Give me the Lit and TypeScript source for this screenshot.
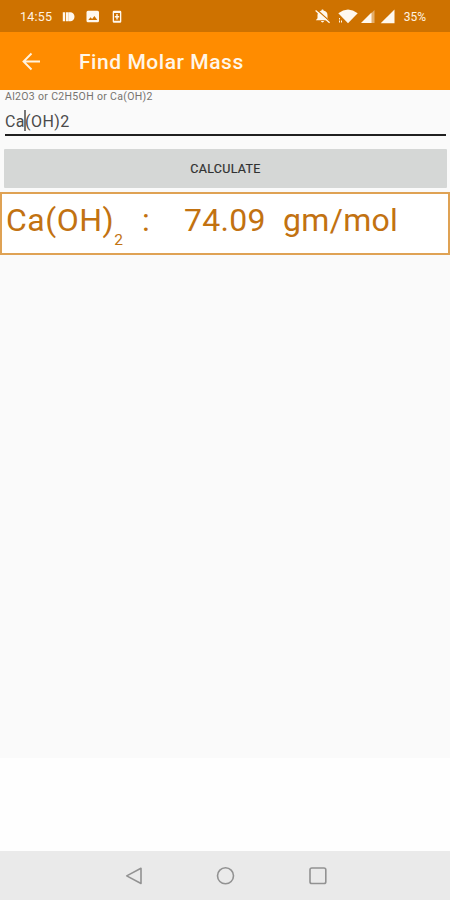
import { LitElement, html, css } from "lit";
import { customElement, state } from "lit/decorators.js";

@customElement("status-bar")
class StatusBar extends LitElement {
  static styles = css`
    :host { display: flex; align-items: center; justify-content: space-between; height: 32px; box-sizing: border-box; padding: 1px 24px 0 20px; background: #ce7200; color: #fff3e2; font-size: 12px; }
    .group { display: flex; align-items: center; }
    .clock { width: 42px; font-size: 12.5px; letter-spacing: 0.2px; }
    svg { display: block; fill: #fff8ee; }
    .battery { margin-left: 8px; font-size: 12px; letter-spacing: 0; }
  `;
  render() {
    return html`
      <div class="group">
        <span class="clock">14:55</span>
        <svg width="66" height="20" viewBox="62 6.700 66 20">
          <path d="M62.800 12h2.200v9h-2.200zM65.800 12h3v9h-3zM69 12h1.300a4.200 4.500 0 0 1 0 9h-1.300z" />
          <path fill-rule="evenodd" d="M88 10.500h9.500a1.500 1.500 0 0 1 1.500 1.500v8.500a1.500 1.500 0 0 1-1.500 1.500H88a1.500 1.500 0 0 1-1.500-1.500V12a1.500 1.500 0 0 1 1.500-1.500zM88.300 19.800h9l-2.900-4-2.300 2.900-1.500-1.800z" />
          <path fill-rule="evenodd" d="M114 10.500h6a1.300 1.300 0 0 1 1.300 1.300v9.400a1.300 1.300 0 0 1-1.300 1.300h-6a1.300 1.300 0 0 1-1.300-1.300v-9.400a1.300 1.300 0 0 1 1.300-1.300zM114 12.700v7.800h6v-7.800z" />
          <path d="M116.300 13.600h1.400v2h1.500v1.500h-1.500v2.200h-1.400v-2.200h-1.500v-1.500h1.500z" />
        </svg>
      </div>
      <div class="group">
        <svg width="82" height="20" viewBox="314 7 82 20">
          <path d="M322.500 9.500c.8 0 1 .5 1 1.100 2.900.6 4 2.500 4 4.700v3l1.700 2H315.800l1.700-2v-3c0-2.200 1.200-4.100 4-4.700 0-.6.200-1.100 1-1.100zM321 21h3c-.1 1.900-2.900 1.900-3 0z" />
          <path d="M316.600 9.500l14 12.500" fill="none" stroke="#ce7200" stroke-width="1.200" />
          <path d="M315.600 10.600l14 12.200" fill="none" stroke="#fff8ee" stroke-width="1.300" />
          <path d="M338.300 13.200q9.700-7.400 19.400 0L348 23.300z" />
          <path d="M339.500 18v1.500M339.500 20.500v2M341.500 20.500v2" stroke="#fff8ee" stroke-width="1" />
          <path d="M374.500 10v13h-13z" opacity=".45" />
          <path d="M371.500 12.500V23H361z" />
          <path d="M394.500 9.500V23.300H380.700z" />
        </svg>
        <span class="battery">35%</span>
      </div>`;
  }
}

@customElement("app-bar")
class AppBar extends LitElement {
  static styles = css`
    :host { display: flex; align-items: center; height: 58px; box-sizing: border-box; padding: 1px 0 0 20px; background: #ff8c00; color: #fff6e8; }
    svg { display: block; margin-right: 37px; }
    h1 { margin: 0; font-size: 21px; font-weight: 500; letter-spacing: 0.55px; }
  `;
  render() {
    return html`
      <svg width="22" height="22" viewBox="0 0 22 22" fill="none" stroke="#fff3df" stroke-width="1.900"><path d="M20 10.500H4M11.500 2.500l-8 8 8 8" /></svg>
      <h1>Find Molar Mass</h1>`;
  }
}

@customElement("nav-bar")
class NavBar extends LitElement {
  static styles = css`
    :host { display: flex; justify-content: center; align-items: center; gap: 72px; height: 49px; background: #eaeaea; }
    svg { display: block; fill: none; stroke: #929292; stroke-width: 1.6; stroke-linejoin: round; }
  `;
  render() {
    return html`
      <svg width="20" height="20" viewBox="0 0 20 20"><path d="M18 2.300v15.200L3.700 9.900z" /></svg>
      <svg width="20" height="20" viewBox="0 0 20 20"><circle cx="10.500" cy="9.800" r="8" /></svg>
      <svg width="20" height="20" viewBox="0 0 20 20"><rect x="3" y="2" width="15.800" height="15.500" rx="1.800" /></svg>`;
  }
}

@customElement("app-root")
class AppRoot extends LitElement {
  static styles = css`
    :host { display: flex; flex-direction: column; width: 450px; height: 900px; overflow: hidden; background: #fefefe; font-family: Roboto, "Liberation Sans", sans-serif; }
    .content { height: 668px; background: #fafafa; }
    .hint { height: 13px; padding-left: 5px; font-size: 10.5px; line-height: 13px; letter-spacing: 0.33px; color: #77736e; white-space: nowrap; }
    .field { display: flex; align-items: center; height: 31px; margin: 0 4px 0 5px; border-bottom: 2px solid #202020; font-size: 16px; letter-spacing: 0.45px; color: #4a4a4a; }
    .field span { padding-top: 6px; }
    .field .caret { width: 2px; height: 21px; margin: 4px -1px 0; padding: 0; background: #777; }
    .calculate { display: block; width: 443px; height: 39px; margin: 13px 3px 0 4px; padding: 0; border: 0; border-radius: 1px; background: #d5d7d6; color: #303131; font: 400 12.5px Roboto, "Liberation Sans", sans-serif; letter-spacing: 0.3px; -webkit-text-stroke: 0.2px #303131; }
    .result { display: flex; height: 63px; margin-top: 4px; box-sizing: border-box; border: 2px solid #dfa254; padding: 7px 0 0 4px; background: #fff; color: #c27211; font-size: 32px; line-height: 38px; letter-spacing: 0.3px; white-space: nowrap; }
    .formula { width: 136px; letter-spacing: 0.5px; }
    .subscript { font-size: 15.5px; line-height: 0; vertical-align: -14px; }
    .colon { width: 42px; }
    .mass { width: 99px; }
    .spacer { flex: 1; }
  `;
  @state() private formula = "Ca(OH)2";
  render() {
    return html`
      <status-bar></status-bar>
      <app-bar></app-bar>
      <main class="content">
        <div class="hint">Al2O3 or C2H5OH or Ca(OH)2</div>
        <div class="field"><span>${this.formula.slice(0, 2)}</span><span class="caret"></span><span>${this.formula.slice(2)}</span></div>
        <button class="calculate">CALCULATE</button>
        <div class="result">
          <span class="formula">Ca(OH)<span class="subscript">2</span></span>
          <span class="colon">:</span>
          <span class="mass">74.09</span>
          <span>gm/mol</span>
        </div>
      </main>
      <div class="spacer"></div>
      <nav-bar></nav-bar>`;
  }
}
